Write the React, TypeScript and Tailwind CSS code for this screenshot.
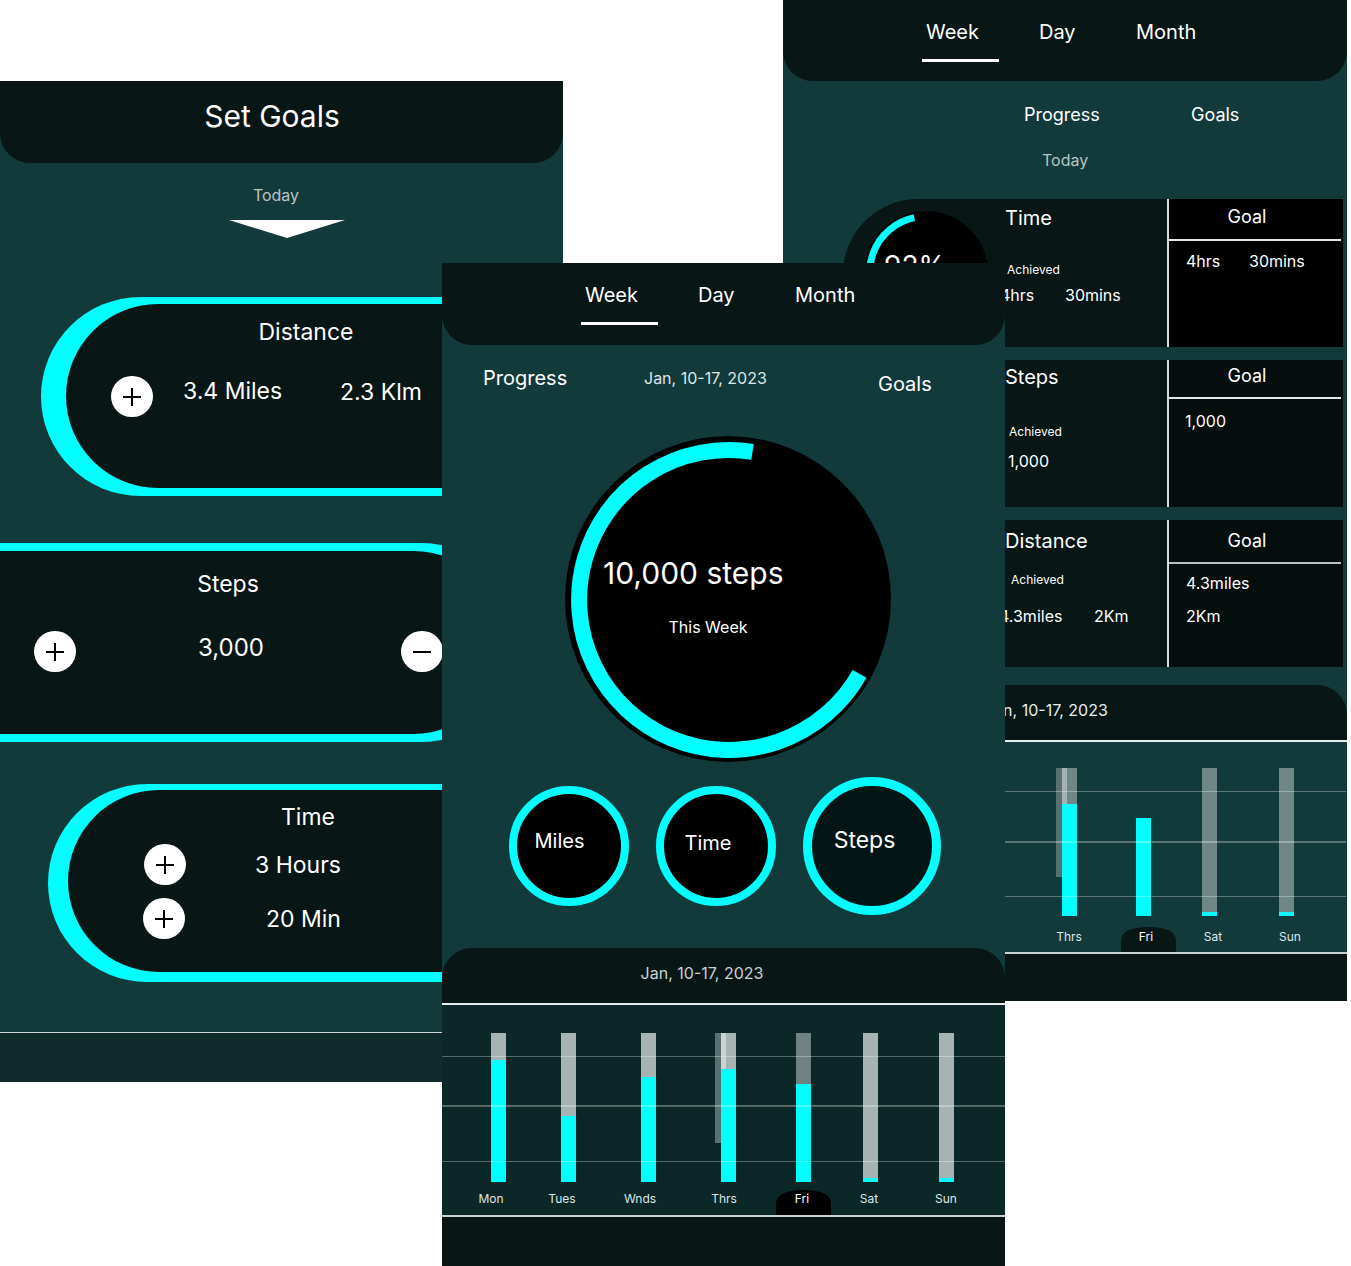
import React from 'react';

type BarData = { x: number; fill: number; gray?: string; ghost?: number; strip?: string };

const centerBars: BarData[] = [
  { x: 49, fill: 122, gray: '#a7b3b3' },
  { x: 119, fill: 66, gray: '#a7b3b3' },
  { x: 199, fill: 105, gray: '#a7b3b3' },
  { x: 279, fill: 113, gray: '#a7b3b3', ghost: 110, strip: '#cbd3d3' },
  { x: 354, fill: 98, gray: '#6f8181' },
  { x: 421, fill: 4, gray: '#a7b3b3' },
  { x: 497, fill: 4, gray: '#a7b3b3' },
];

const sideBars: BarData[] = [
  { x: 49, fill: 120, gray: '#6f8787' },
  { x: 119, fill: 70, gray: '#6f8787' },
  { x: 199, fill: 100, gray: '#6f8787' },
  { x: 279, fill: 112, gray: '#6f8787', ghost: 109, strip: '#a3b3b3' },
  { x: 353, fill: 98 },
  { x: 419, fill: 4, gray: '#6f8787' },
  { x: 496, fill: 4, gray: '#6f8787' },
];

const centerLabels: [string, number][] = [
  ['Mon', 49], ['Tues', 120], ['Wnds', 198], ['Thrs', 282], ['Fri', 360], ['Sat', 427], ['Sun', 504],
];
const sideLabels: [string, number][] = [
  ['Mon', 49], ['Tues', 120], ['Wnds', 198], ['Thrs', 286], ['Fri', 363], ['Sat', 430], ['Sun', 507],
];

function Chart({ bars, labels, top, bottom, grid, pillX, pillFill, labelY }: {
  bars: BarData[]; labels: [string, number][]; top: number; bottom: number;
  grid: number[]; pillX: number; pillFill: string; labelY: number;
}) {
  const h = bottom - top;
  return (
    <svg width="563" height="210" className="block">
      {bars.map((b) => (
        <g key={b.x}>
          {b.ghost ? <rect x={b.x - 6} y={top} width={21} height={b.ghost} fill="#587070" /> : null}
          {b.gray ? <rect x={b.x} y={top} width={15} height={h} fill={b.gray} /> : null}
          {b.strip ? <rect x={b.x} y={top} width={5} height={h - b.fill} fill={b.strip} /> : null}
          <rect x={b.x} y={bottom - b.fill} width={15} height={b.fill} fill="#00ffff" />
        </g>
      ))}
      {grid.map((g, i) => (
        <rect key={g} x={0} y={g} width={563} height={i === 1 ? 2 : 1} fill="rgba(255,255,255,0.3)" />
      ))}
      <path
        d={`M${pillX} 210 V199 Q${pillX} 185 ${pillX + 27.5} 185 Q${pillX + 55} 185 ${pillX + 55} 199 V210 Z`}
        fill={pillFill}
      />
      {labels.map(([t, cx]) => (
        <text key={t} x={cx} y={labelY} textAnchor="middle" fontSize="12"
          fill={t === 'Fri' ? '#ffffff' : '#dfe6e6'} fontFamily="Inter, sans-serif">
          {t}
        </text>
      ))}
    </svg>
  );
}

function RoundBtn({ minus, className = '' }: { minus?: boolean; className?: string }) {
  return (
    <div className={`w-[42px] h-[41px] shrink-0 rounded-full bg-white flex items-center justify-center ${className}`}>
      <svg width="20" height="20" viewBox="0 0 20 20">
        <path d={minus ? 'M1 10h18' : 'M10 1v18M1 10h18'} stroke="#000" strokeWidth="2" />
      </svg>
    </div>
  );
}

function Tabs({ tall }: { tall?: boolean }) {
  return (
    <div className={`${tall ? 'h-[82px]' : 'h-[81px]'} shrink-0 rounded-b-[30px] bg-[#081616] flex items-start pt-[20px] pl-[143px] text-[20px] leading-[24px]`}>
      <div className="w-[113px] flex flex-col">
        <span>Week</span>
        <span className="mt-[15px] -ml-[4px] w-[77px] h-[3px] bg-white" />
      </div>
      <div className="w-[97px]">Day</div>
      <div>Month</div>
    </div>
  );
}

function SetGoalsScreen() {
  return (
    <div className="absolute left-0 top-[81px] w-[563px] h-[1001px] overflow-hidden bg-[#133a3b] flex flex-col">
      <div className="h-[82px] shrink-0 rounded-b-[30px] bg-[#081616] pt-[17px]">
        <div className="w-[544px] text-center text-[30px] leading-[36px]">Set Goals</div>
      </div>
      <div className="mt-[22px] w-[552px] text-center text-[16px] leading-[20px] text-[#b9c4c4]">Today</div>
      <svg className="mt-[15px] ml-[229px] shrink-0" width="116" height="18" viewBox="0 0 116 18">
        <polygon points="0,0 116,0 58,18" fill="#ffffff" />
      </svg>

      {/* distance */}
      <div className="mt-[59px] ml-[41px] w-[560px] h-[199px] shrink-0 rounded-l-full bg-[#00ffff] pt-[7px] pb-[8px] pl-[25px]">
        <div className="h-full rounded-l-full bg-[#081616] pt-[14px]">
          <div className="w-[480px] text-center text-[23px] leading-[28px]">Distance</div>
          <div className="mt-[30px] flex items-center">
            <RoundBtn className="ml-[45px]" />
            <div className="ml-[30px] w-[157px] mb-[12px] text-[23px] leading-[28px]">3.4 Miles</div>
            <div className="mb-[10px] text-[23px] leading-[28px]">2.3 Klm</div>
          </div>
        </div>
      </div>

      {/* steps */}
      <div className="mt-[47px] w-[521px] h-[199px] shrink-0 rounded-r-full bg-[#00ffff] pt-[8px] pb-[8px] pr-[16px]">
        <div className="h-full rounded-r-full bg-[#081616] pt-[19px]">
          <div className="w-[456px] text-center text-[23px] leading-[28px]">Steps</div>
          <div className="mt-[33px] flex items-center">
            <RoundBtn className="ml-[34px]" />
            <div className="ml-[122px] w-[203px] mb-[8px] text-[24px] leading-[30px]">3,000</div>
            <RoundBtn minus />
          </div>
        </div>
      </div>

      {/* time */}
      <div className="mt-[42px] ml-[48px] w-[560px] h-[198px] shrink-0 rounded-l-full bg-[#00ffff] pt-[6px] pb-[10px] pl-[20px]">
        <div className="h-full rounded-l-full bg-[#081616] pt-[13px]">
          <div className="w-[480px] text-center text-[23px] leading-[28px]">Time</div>
          <div className="mt-[13px] flex items-center">
            <RoundBtn className="ml-[76px]" />
            <div className="ml-[69px] text-[23px] leading-[28px]">3 Hours</div>
          </div>
          <div className="mt-[13px] flex items-center">
            <RoundBtn className="ml-[75px]" />
            <div className="ml-[81px] text-[23px] leading-[28px]">20 Min</div>
          </div>
        </div>
      </div>

      <div className="mt-[50px] h-px shrink-0 bg-[#cfd6d6]" />
      <div className="flex-1 bg-[#0f2a2b]" />
    </div>
  );
}

function ProgressScreen() {
  return (
    <div className="absolute left-[442px] top-[263px] z-10 w-[563px] h-[1003px] bg-[#133a3b] flex flex-col">
      <Tabs tall />
      <div className="h-[91px] shrink-0 flex items-start pl-[41px]">
        <div className="w-[161px] mt-[21px] text-[20px] leading-[24px]">Progress</div>
        <div className="w-[234px] mt-[23px] text-[16px] leading-[20px] text-[#dfe5e5]">Jan, 10-17, 2023</div>
        <div className="mt-[27px] text-[20px] leading-[24px]">Goals</div>
      </div>

      <div className="ml-[123px] relative w-[326px] h-[326px] shrink-0 rounded-full bg-black">
        <svg className="absolute inset-0" width="326" height="326" viewBox="0 0 326 326">
          <path d="M294.6 237.9 A150 150 0 1 1 187.5 15.8" fill="none" stroke="#00ffff" strokeWidth="16" />
        </svg>
        <div className="relative pt-[119px] pl-[38px] text-[30px] leading-[36px]">10,000 steps</div>
        <div className="relative mt-[26px] w-[286px] text-center text-[16px] leading-[20px]">This Week</div>
      </div>

      <div className="mt-[15px] h-[138px] shrink-0 flex items-center">
        <div className="ml-[67px] w-[120px] h-[120px] rounded-full border-[8px] border-[#00ffff] bg-black flex items-center justify-center">
          <span className="pr-[19px] pb-[10px] text-[20px] leading-[24px]">Miles</span>
        </div>
        <div className="ml-[27px] w-[120px] h-[120px] rounded-full border-[8px] border-[#00ffff] bg-black flex items-center justify-center">
          <span className="pr-[16px] pb-[6px] text-[20px] leading-[24px]">Time</span>
        </div>
        <div className="ml-[27px] w-[138px] h-[138px] rounded-full border-[9px] border-[#00ffff] bg-[#021616] flex items-center justify-center">
          <span className="pr-[15px] pb-[12px] text-[23px] leading-[28px]">Steps</span>
        </div>
      </div>

      <div className="mt-[33px] flex-1 flex flex-col">
        <div className="h-[55px] shrink-0 rounded-t-[30px] bg-[#081616] pt-[15px]">
          <div className="w-[520px] text-center text-[16px] leading-[20px] text-[#c9d1d1]">Jan, 10-17, 2023</div>
        </div>
        <div className="h-[2px] shrink-0 bg-[#e8eded]" />
        <div className="h-[210px] shrink-0 bg-[#0c2728]">
          <Chart bars={centerBars} labels={centerLabels} top={28} bottom={177} grid={[51, 100, 156]}
            pillX={334} pillFill="#000000" labelY={198} />
        </div>
        <div className="h-[2px] shrink-0 bg-[#c9d1d1]" />
        <div className="flex-1 bg-[#081616]" />
      </div>
    </div>
  );
}

function DetailScreen() {
  return (
    <div className="absolute left-[783px] top-0 w-[564px] h-[1001px] bg-[#133a3b] flex flex-col">
      <Tabs />
      <div className="mt-[23px] flex pl-[241px] text-[18px] leading-[22px]">
        <div className="w-[167px]">Progress</div>
        <div>Goals</div>
      </div>
      <div className="mt-[24px] pl-[259px] text-[16px] leading-[20px] text-[#b9c4c4]">Today</div>

      <div className="mt-[29px] ml-[60px] flex flex-col gap-[13px]">
        {/* time */}
        <div className="h-[148px] flex">
          <div className="w-[324px] rounded-tl-[75px] bg-[#081616] flex items-start">
            <div className="ml-[21px] mt-[12px] relative w-[124px] h-[124px] shrink-0 rounded-full bg-black flex items-center justify-center">
              <svg className="absolute inset-0" width="124" height="124" viewBox="0 0 124 124">
                <path d="M115.1 81.3 A56.5 56.5 0 1 1 50.3 6.7" fill="none" stroke="#00ffff" strokeWidth="7" />
              </svg>
              <span className="relative pr-[22px] pb-[14px] text-[28px] leading-[34px]">92%</span>
            </div>
            <div className="ml-[17px] pt-[7px] flex flex-col">
              <div className="text-[20px] leading-[24px]">Time</div>
              <div className="mt-[32px] ml-[2px] text-[12px] leading-[16px]">Achieved</div>
              <div className="mt-[7px] -ml-[5px] flex text-[16px] leading-[20px]">
                <span className="w-[65px]">4hrs</span>
                <span>30mins</span>
              </div>
            </div>
          </div>
          <div className="w-[2px] bg-[#d5dcdc]" />
          <div className="w-[174px] bg-black pt-[7px]">
            <div className="w-[156px] text-center text-[18px] leading-[22px]">Goal</div>
            <div className="mt-[11px] w-[172px] h-[2px] bg-[#e3e8e8]" />
            <div className="mt-[10px] pl-[17px] flex text-[16px] leading-[20px]">
              <span className="w-[63px]">4hrs</span>
              <span>30mins</span>
            </div>
          </div>
        </div>

        {/* steps */}
        <div className="h-[147px] flex">
          <div className="w-[324px] bg-[#081616] pl-[162px] pt-[5px] flex flex-col">
            <div className="text-[20px] leading-[24px]">Steps</div>
            <div className="mt-[35px] ml-[4px] text-[12px] leading-[16px]">Achieved</div>
            <div className="mt-[11px] ml-[3px] text-[16px] leading-[20px]">1,000</div>
          </div>
          <div className="w-[2px] bg-[#d5dcdc]" />
          <div className="w-[174px] bg-[#050d0d] pt-[5px]">
            <div className="w-[156px] text-center text-[18px] leading-[22px]">Goal</div>
            <div className="mt-[10px] w-[172px] h-[2px] bg-[#e3e8e8]" />
            <div className="mt-[12px] pl-[16px] text-[16px] leading-[20px]">1,000</div>
          </div>
        </div>

        {/* distance */}
        <div className="h-[147px] flex">
          <div className="w-[324px] bg-[#081616] pl-[162px] pt-[9px] flex flex-col">
            <div className="text-[20px] leading-[24px]">Distance</div>
            <div className="mt-[19px] ml-[6px] text-[12px] leading-[16px]">Achieved</div>
            <div className="mt-[18px] -ml-[6px] flex text-[16px] leading-[20px]">
              <span className="w-[95px]">4.3miles</span>
              <span>2Km</span>
            </div>
          </div>
          <div className="w-[2px] bg-[#d5dcdc]" />
          <div className="w-[174px] bg-[#050d0d] pt-[10px]">
            <div className="w-[156px] text-center text-[18px] leading-[22px]">Goal</div>
            <div className="mt-[10px] w-[172px] h-[2px] bg-[#b9c2c2]" />
            <div className="mt-[9px] pl-[17px] text-[16px] leading-[20px]">4.3miles</div>
            <div className="mt-[13px] pl-[17px] text-[16px] leading-[20px]">2Km</div>
          </div>
        </div>
      </div>

      <div className="mt-[18px] flex-1 flex flex-col">
        <div className="h-[55px] shrink-0 rounded-tr-[30px] bg-[#081616] pt-[15px] pl-[202px] text-[16px] leading-[20px] text-[#e8eded]">
          Jan, 10-17, 2023
        </div>
        <div className="h-[2px] shrink-0 bg-[#e8eded]" />
        <div className="h-[210px] shrink-0">
          <Chart bars={sideBars} labels={sideLabels} top={26} bottom={174} grid={[49, 99, 154]}
            pillX={338} pillFill="#081616" labelY={199} />
        </div>
        <div className="h-[2px] shrink-0 bg-[#c9d1d1]" />
        <div className="flex-1 bg-[#081616]" />
      </div>
    </div>
  );
}

export default function App() {
  return (
    <div className="relative w-[1351px] h-[1266px] overflow-hidden bg-white text-white font-['Inter','Noto_Sans',sans-serif]">
      <SetGoalsScreen />
      <DetailScreen />
      <ProgressScreen />
    </div>
  );
}
